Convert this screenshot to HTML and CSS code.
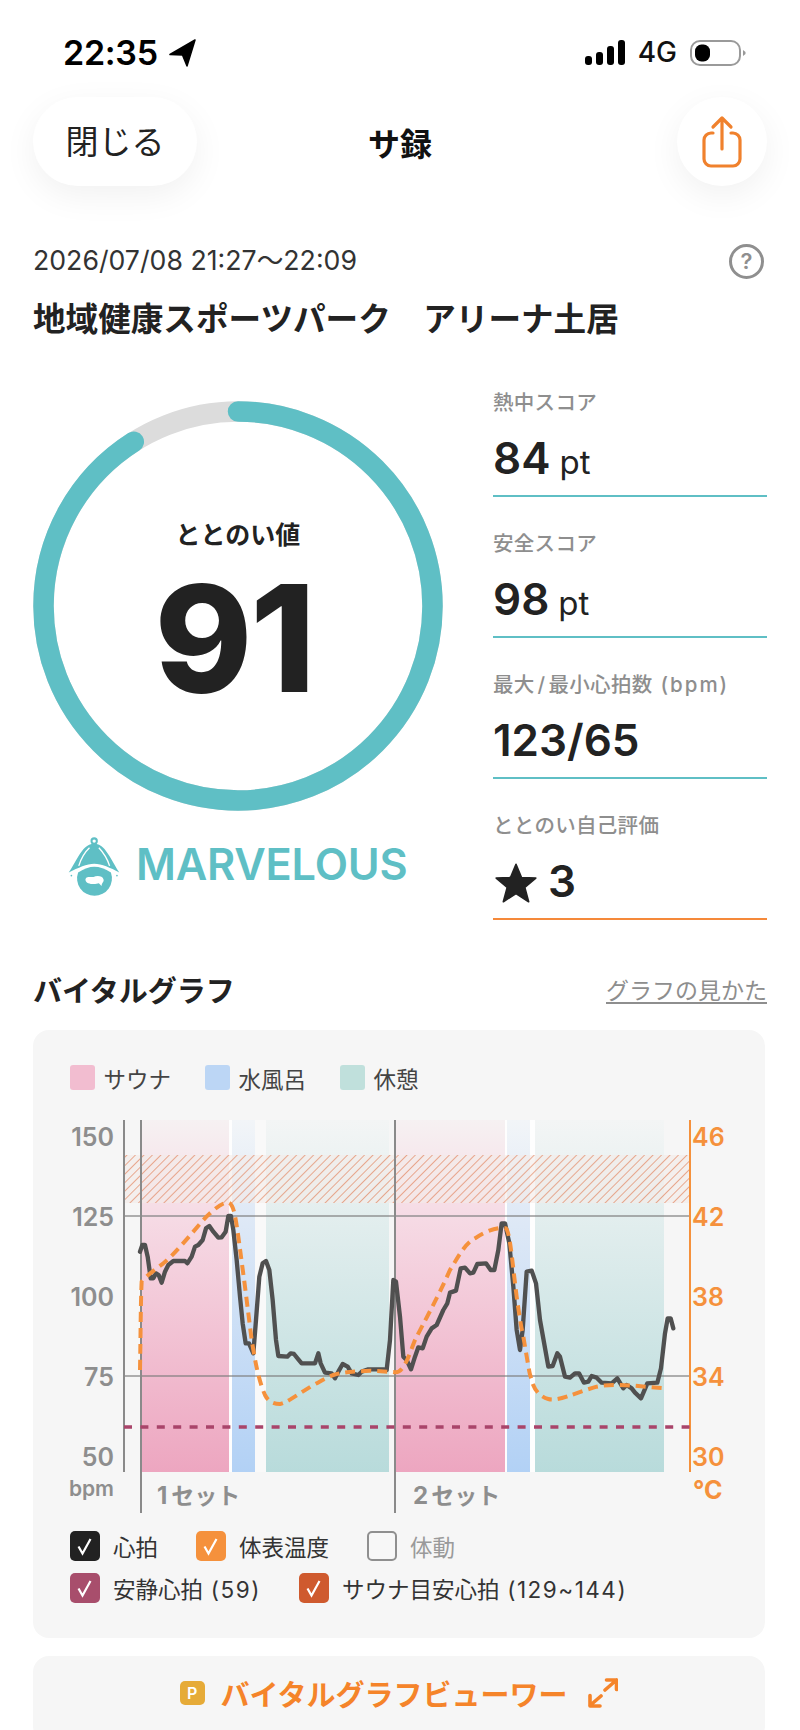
FILE: index.html
```html
<!DOCTYPE html>
<html lang="ja">
<head>
<meta charset="utf-8">
<title>サ録</title>
<link rel="stylesheet" href="styles.css">
</head>
<body>
<div class="phone">
  <div class="status">
    <div class="status-left">
      <span class="time">22:35</span>
      <svg class="loc" viewBox="0 0 28 28"><path d="M26 1 L1 15.500 L13.500 16 L18 27 Z"/></svg>
    </div>
    <div class="status-right">
      <svg class="signal" viewBox="0 0 40 25"><rect x="0" y="16" width="7" height="9" rx="3"/><rect x="11" y="12" width="7" height="13" rx="3"/><rect x="22" y="6" width="7" height="19" rx="3"/><rect x="33" y="0" width="7" height="25" rx="3"/></svg>
      <span class="net">4G</span>
      <svg class="battery" viewBox="0 0 56 26"><rect x="1" y="1" width="49" height="24" rx="9" class="bat-o"/><rect x="5" y="4.500" width="15" height="17" rx="6.500"/><path d="M53 10 L55.500 12 V14 L53 16Z" class="bat-n"/></svg>
    </div>
  </div>

  <header class="nav">
    <button class="pill close-btn">閉じる</button>
    <div class="nav-title">サ録</div>
    <button class="pill share-btn" aria-label="share">
      <svg class="share" viewBox="0 0 44 54"><path d="M13 18 H11 A7 7 0 0 0 4 25 V44 A7 7 0 0 0 11 51 H33 A7 7 0 0 0 40 44 V25 A7 7 0 0 0 33 18 H31 M22 34 V3 M13 12 L22 3 L31 12"/></svg>
    </button>
  </header>

  <main class="content">
    <div class="date-row">
      <span class="date">2026/07/08 21:27～22:09</span>
      <span class="help">?</span>
    </div>
    <h1 class="venue">地域健康スポーツパーク　アリーナ土居</h1>

    <section class="summary">
      <div class="score-col">
        <div class="gauge">
          <svg class="gauge-ring" viewBox="0 0 410 410">
            <circle cx="205" cy="205" r="194.500" class="ring-bg"/>
            <circle cx="205" cy="205" r="194.500" class="ring-fg" pathLength="100" stroke-dasharray="91 100"/>
          </svg>
          <div class="gauge-text">
            <div class="gauge-label">ととのい値</div>
            <div class="gauge-value">91</div>
          </div>
        </div>
        <div class="rank">
          <svg class="hat" viewBox="0 0 200 200">
            <circle cx="102" cy="30" r="8" class="hat-ring"/>
            <path class="hat-fill" d="M102 38 C80 38 68 55 55 75 C45 92 35 110 26 124 C55 110 80 98 102 98 C125 98 150 110 177 124 C168 110 158 92 148 75 C135 55 124 38 102 38Z"/>
            <path class="hat-rib" d="M88 50 C72 65 62 85 56 104 M116 50 C130 65 142 85 148 104"/>
            <path class="hat-fill" d="M54 124 C72 113 88 107 102 107 C118 107 135 113 152 124 A52 52 0 1 1 54 124Z"/>
            <path class="hat-white" d="M76 146 C76 133 95 139 100 137 C110 133 127 133 130 145 C132 152 125 154 124 164 L116 156 C105 160 78 160 76 146Z"/>
            <circle cx="34" cy="133" r="2.500" class="hat-fill"/><circle cx="170" cy="133" r="2.500" class="hat-fill"/>
          </svg>
          <span class="rank-text">MARVELOUS</span>
        </div>
      </div>
      <div class="stats">
        <div class="stat">
          <div class="stat-label">熱中スコア</div>
          <div class="stat-value">84<span class="unit">pt</span></div>
        </div>
        <div class="stat">
          <div class="stat-label">安全スコア</div>
          <div class="stat-value">98<span class="unit">pt</span></div>
        </div>
        <div class="stat">
          <div class="stat-label">最大<span class="slash">/</span>最小心拍数<span class="bpm-unit">(bpm)</span></div>
          <div class="stat-value">123/65</div>
        </div>
        <div class="stat stat-self">
          <div class="stat-label">ととのい自己評価</div>
          <div class="stat-value">
            <svg class="star" viewBox="0 0 40 40"><path d="M20 3 L25 15 L38 15.500 L28 24 L31.500 37 L20 29.500 L8.500 37 L12 24 L2 15.500 L15 15 Z"/></svg>3
          </div>
        </div>
      </div>
    </section>

    <div class="section-head">
      <h2 class="section-title">バイタルグラフ</h2>
      <a class="section-link">グラフの見かた</a>
    </div>

    <section class="card chart-card">
      <div class="legend">
        <span class="legend-item"><i class="sw sw-sauna"></i>サウナ</span>
        <span class="legend-item"><i class="sw sw-water"></i>水風呂</span>
        <span class="legend-item"><i class="sw sw-rest"></i>休憩</span>
      </div>
      <svg class="chart" viewBox="33 1100 734 420">
        <defs>
          <pattern id="hatch" width="6" height="6" patternUnits="userSpaceOnUse" patternTransform="rotate(45)">
            <line x1="0" y1="0" x2="0" y2="6" class="hatch-line"/>
          </pattern>
          <linearGradient id="gPink" x1="0" y1="0" x2="0" y2="1"><stop offset="0" stop-color="#f6f1f2"/><stop offset=".27" stop-color="#f6dbe5"/><stop offset="1" stop-color="#eda6c0"/></linearGradient>
          <linearGradient id="gBlue" x1="0" y1="0" x2="0" y2="1"><stop offset="0" stop-color="#f2f5f8"/><stop offset=".27" stop-color="#dfe9f6"/><stop offset="1" stop-color="#b2d1f5"/></linearGradient>
          <linearGradient id="gTeal" x1="0" y1="0" x2="0" y2="1"><stop offset="0" stop-color="#f3f5f5"/><stop offset=".27" stop-color="#e3eeee"/><stop offset="1" stop-color="#b8dbdb"/></linearGradient>
        </defs>
        <rect x="229" y="1120" width="3" height="352" class="gap"/>
        <rect x="255" y="1120" width="11" height="352" class="gap-soft"/>
        <rect x="505" y="1120" width="2" height="352" class="gap"/>
        <rect x="530" y="1120" width="5" height="352" class="gap"/>
        <rect x="142" y="1120" width="87" height="352" fill="url(#gPink)"/>
        <rect x="232" y="1120" width="23" height="352" fill="url(#gBlue)"/>
        <rect x="266" y="1120" width="123" height="352" fill="url(#gTeal)"/>
        <rect x="396" y="1120" width="109" height="352" fill="url(#gPink)"/>
        <rect x="507" y="1120" width="23" height="352" fill="url(#gBlue)"/>
        <rect x="535" y="1120" width="129" height="352" fill="url(#gTeal)"/>
        <rect x="124" y="1155" width="566" height="48" class="band"/>
        <rect x="124" y="1155" width="566" height="48" fill="url(#hatch)"/>
        <line x1="124" y1="1216" x2="690" y2="1216" class="grid"/>
        <line x1="124" y1="1376" x2="690" y2="1376" class="grid"/>
        <line x1="124" y1="1120" x2="124" y2="1472" class="axis"/>
        <line x1="141" y1="1120" x2="141" y2="1513" class="axis"/>
        <line x1="395" y1="1120" x2="395" y2="1513" class="axis"/>
        <line x1="690" y1="1120" x2="690" y2="1472" class="axis-r"/>
        <line x1="124" y1="1427" x2="690" y2="1427" class="rest-line"/>
        <g transform="translate(50 1100) scale(.33333)">
          <path class="hr" d="M270 455 L277 435 L285 435 L293 470 L302 535 L310 535 L318 520 L326 525 L335 548 L345 515 L355 495 L370 483 L405 483 L412 490 L425 470 L435 440 L445 435 L458 420 L468 385 L478 378 L490 395 L505 413 L515 412 L527 395 L535 348 L543 348 L550 390 L560 480 L570 590 L578 670 L587 730 L597 730 L610 760 L618 660 L628 530 L638 490 L648 483 L658 510 L668 600 L678 720 L685 768 L712 770 L722 760 L732 762 L745 778 L755 790 L795 790 L805 760 L812 790 L825 818 L845 820 L855 835 L865 815 L878 792 L893 800 L905 820 L925 825 L935 815 L955 808 L1000 808 L1010 810 L1020 720 L1030 540 L1038 545 L1050 650 L1060 770 L1070 780 L1083 808 L1095 770 L1105 742 L1118 745 L1130 710 L1145 685 L1160 675 L1180 630 L1192 610 L1200 578 L1218 572 L1232 505 L1245 503 L1260 520 L1270 518 L1282 492 L1308 490 L1322 510 L1333 510 L1345 450 L1355 370 L1365 370 L1378 430 L1390 560 L1400 690 L1410 750 L1418 690 L1430 515 L1445 512 L1458 550 L1470 660 L1495 800 L1508 798 L1522 760 L1530 770 L1545 830 L1560 833 L1575 820 L1587 820 L1602 848 L1615 845 L1625 828 L1640 833 L1655 848 L1685 850 L1702 835 L1720 865 L1730 855 L1745 865 L1755 878 L1773 895 L1792 850 L1822 848 L1833 805 L1845 700 L1853 655 L1862 655 L1870 685"/>
          <path class="temp" d="M270 810 C272 700 272 600 275 545 C285 530 320 505 340 490 C370 465 400 430 460 360 C490 328 520 305 535 308 C550 312 555 340 565 410 L585 560 L605 720 C615 780 625 840 645 885 C655 905 670 912 690 912 C710 908 725 895 790 855 C810 845 830 832 850 825 C880 815 910 815 960 812 L1030 816 C1060 825 1075 770 1095 720 C1120 670 1160 600 1200 510 C1225 470 1245 430 1275 415 C1310 390 1350 380 1368 385 C1380 400 1385 470 1400 590 C1410 660 1415 690 1420 710 C1432 780 1440 830 1442 830 C1450 870 1470 890 1495 897 C1525 905 1570 880 1640 860 C1680 852 1720 855 1750 857 L1845 865"/>
        </g>
        <text x="114" y="1146" class="tick">150</text>
        <text x="114" y="1226" class="tick">125</text>
        <text x="114" y="1306" class="tick">100</text>
        <text x="114" y="1386" class="tick">75</text>
        <text x="114" y="1466" class="tick">50</text>
        <text x="114" y="1496" class="bpm">bpm</text>
        <text x="692" y="1146" class="tick-r">46</text>
        <text x="692" y="1226" class="tick-r">42</text>
        <text x="692" y="1306" class="tick-r">38</text>
        <text x="692" y="1386" class="tick-r">34</text>
        <text x="692" y="1466" class="tick-r">30</text>
        <text x="693" y="1499" class="deg">°C</text>
        <text x="157" y="1504" class="set">1<tspan class="set-kana" dx="4">セット</tspan></text>
        <text x="413" y="1504" class="set">2<tspan class="set-kana" dx="3">セット</tspan></text>
      </svg>
      <div class="checks">
        <div class="check-row">
          <span class="check-item"><i class="box box-black"><svg class="tick-mark" viewBox="0 0 30 30"><path d="M8.500 15.500 L12.500 22.500 L20.500 8"/></svg></i>心拍</span>
          <span class="check-item"><i class="box box-orange"><svg class="tick-mark" viewBox="0 0 30 30"><path d="M8.500 15.500 L12.500 22.500 L20.500 8"/></svg></i>体表温度</span>
          <span class="check-item off"><i class="box box-empty"></i>体動</span>
        </div>
        <div class="check-row">
          <span class="check-item"><i class="box box-plum"><svg class="tick-mark" viewBox="0 0 30 30"><path d="M8.500 15.500 L12.500 22.500 L20.500 8"/></svg></i><span>安静心拍<span class="lat"> (59)</span></span></span>
          <span class="check-item"><i class="box box-red"><svg class="tick-mark" viewBox="0 0 30 30"><path d="M8.500 15.500 L12.500 22.500 L20.500 8"/></svg></i><span>サウナ目安心拍<span class="lat"> (129~144)</span></span></span>
        </div>
      </div>
    </section>

    <section class="card viewer">
      <span class="p-badge">P</span>
      <span class="viewer-text">バイタルグラフビューワー</span>
      <svg class="expand" viewBox="0 0 30 30"><path d="M17 12 L28.500 2 M18.500 2 H28.500 V11.500 M13 18 L2 27.500 M2 17.500 V28 H12"/></svg>
    </section>
  </main>
</div>
</body>
</html>
```
FILE: styles.css
```css
* { box-sizing: border-box; }
html, body { margin: 0; padding: 0; background: #fff; }
body { font-family: Inter, "Noto Sans CJK JP", sans-serif; color: #222; }
.phone { width: 800px; height: 1730px; overflow: hidden; background: #fff; }

.status { height: 97px; padding: 40px 54px 0 63px; display: flex; justify-content: space-between; align-items: flex-start; }
.status-left, .status-right { display: flex; align-items: center; height: 25px; }
.time { font-size: 34px; font-weight: 600; color: #000; letter-spacing: -.3px; line-height: 25px; }
.loc { width: 28px; height: 28px; margin-left: 11px; fill: #000; stroke: #000; stroke-width: 1.500; stroke-linejoin: round; }
.signal { width: 40px; height: 25px; fill: #000; }
.net { font-size: 28px; font-weight: 500; color: #111; margin: 0 13px; line-height: 25px; }
.battery { width: 56px; height: 26px; fill: #000; }
.bat-o { fill: none; stroke: #9a9a9a; stroke-width: 2; }
.bat-n { fill: #999; }

.nav { height: 89px; margin: 0 33px; display: grid; grid-template-columns: 1fr auto 1fr; align-items: center; }
.pill { height: 89px; border: 0; background: #fff; border-radius: 45px; box-shadow: 0 10px 34px rgba(0, 0, 0, .06); font-family: inherit; padding: 0; display: flex; align-items: center; justify-content: center; color: #222; }
.close-btn { width: 164px; font-size: 33px; font-weight: 400; padding-bottom: 3px; }
.share-btn { width: 90px; justify-self: end; }
.nav-title { font-size: 32px; font-weight: 700; color: #111; }
.share { width: 44px; height: 54px; fill: none; stroke: #f0812d; stroke-width: 3.200; stroke-linecap: round; stroke-linejoin: round; margin-top: 1px; }

.content { padding: 0 33px; }
.date-row { margin-top: 54px; height: 36px; display: flex; align-items: center; justify-content: space-between; }
.date { font-size: 26.700px; font-weight: 400; color: #333; }
.help { width: 35px; height: 35px; border-radius: 50%; border: 3px solid #8f8f8f; color: #8f8f8f; font-size: 22px; font-weight: 600; display: flex; align-items: center; justify-content: center; margin: 6px 3px 0 0; }
.venue { margin: 23px 0 0; font-size: 32.600px; line-height: 40px; height: 40px; font-weight: 600; color: #222; white-space: nowrap; }

.summary { height: 564px; margin-top: 17px; display: flex; justify-content: space-between; }
.score-col { width: 410px; padding-top: 45px; }
.gauge { width: 410px; height: 410px; position: relative; }
.gauge-ring { width: 410px; height: 410px; display: block; }
.ring-bg { fill: none; stroke: #dcdcdc; stroke-width: 20.500; }
.ring-fg { fill: none; stroke: #5fbfc5; stroke-width: 20.500; stroke-linecap: round; transform: rotate(-90deg); transform-origin: 205px 205px; }
.gauge-text { position: absolute; inset: 0; display: flex; flex-direction: column; align-items: center; }
.gauge-label { margin-top: 116px; font-size: 25px; line-height: 36px; font-weight: 700; color: #222; }
.gauge-value { margin: 3px 8px 0 0; font-size: 148px; line-height: 166px; font-weight: 800; color: #222; letter-spacing: -2px; }
.rank { margin-top: 23px; padding-left: 27px; display: flex; align-items: center; height: 60px; }
.hat { width: 67px; height: 67px; flex: none; }
.hat-fill { fill: #5fbfc5; }
.hat-ring { fill: none; stroke: #5fbfc5; stroke-width: 6; }
.hat-rib { fill: none; stroke: #fff; stroke-width: 4; }
.hat-white { fill: #fff; }
.rank-text { margin-left: 9px; font-size: 43.300px; font-weight: 600; color: #5fbfc5; line-height: 60px; letter-spacing: -.2px; }

.stats { width: 274px; }
.stat { height: 141px; border-bottom: 2px solid #5fbfc5; display: flex; flex-direction: column; justify-content: flex-end; padding-bottom: 8px; }
.stat-self { border-bottom-color: #f5893a; }
.stat-label { font-size: 20.500px; line-height: 28px; font-weight: 500; color: #8e8e8e; letter-spacing: .3px; white-space: nowrap; margin-bottom: 16px; }
.slash { margin: 0 3px; }
.bpm-unit { margin-left: 8px; letter-spacing: 2px; }
.stat-value { height: 54px; font-size: 44px; line-height: 50px; font-weight: 600; color: #222; display: flex; align-items: baseline; }
.unit { font-size: 33px; font-weight: 400; margin-left: 9px; }
.star { width: 44px; height: 44px; fill: #222; stroke: #222; stroke-width: 1.500; stroke-linejoin: round; margin: 0 10px 0 1px; align-self: center; }

.section-head { margin-top: 49px; height: 40px; margin-bottom: 21px; display: flex; align-items: center; justify-content: space-between; }
.section-title { margin: 0; font-size: 29px; font-weight: 700; color: #222; }
.section-link { font-size: 23px; color: #8e8e8e; text-decoration: underline; text-underline-offset: 3px; }

.card { background: #f6f6f6; border-radius: 16px; width: 732px; }
.chart-card { height: 608px; padding-top: 35px; }
.legend { height: 25px; padding-left: 37px; display: flex; gap: 34px; }
.legend-item { display: flex; align-items: center; gap: 8.500px; font-size: 22.500px; color: #444; }
.sw { display: block; width: 25px; height: 25px; border-radius: 3px; }
.sw-sauna { background: #f2bdd0; }
.sw-water { background: #bcd6f5; }
.sw-rest { background: #c0e0dc; }

.chart { display: block; width: 734px; height: 420px; margin-top: 10px; }
.band { fill: #f3ebe8; fill-opacity: .6; }
.hatch-line { stroke: #dd6f42; stroke-width: 1.400; stroke-opacity: .8; }
.gap { fill: #fff; fill-opacity: .9; }
.gap-soft { fill: #fff; fill-opacity: .3; }
.grid { stroke: #7d7d7d; stroke-width: 2; stroke-opacity: .6; }
.axis { stroke: #8a8a8a; stroke-width: 2; }
.axis-r { stroke: #f5913c; stroke-width: 2; }
.rest-line { stroke: #a9446a; stroke-width: 3.500; stroke-dasharray: 8 8.400; }
.hr { fill: none; stroke: #505050; stroke-width: 13; stroke-linejoin: round; stroke-linecap: round; }
.temp { fill: none; stroke: #f5913c; stroke-width: 12; stroke-dasharray: 30 18; }
.tick, .tick-r { font-size: 25px; font-weight: 600; font-family: Inter, sans-serif; }
.tick { fill: #8e8e8e; text-anchor: end; }
.tick-r { fill: #f5913c; }
.bpm { font-size: 21px; font-weight: 600; fill: #8e8e8e; text-anchor: end; font-family: Inter, sans-serif; }
.deg { font-size: 25px; font-weight: 700; fill: #f5913c; font-family: Inter, sans-serif; }
.set { font-size: 24px; font-weight: 700; fill: #8e8e8e; font-family: Inter, "Noto Sans CJK JP", sans-serif; }
.set-kana { font-size: 23px; font-weight: 700; }

.checks { margin-top: 11px; padding-left: 37px; display: flex; flex-direction: column; gap: 12px; }
.check-row { display: flex; gap: 38px; height: 30px; }
.check-item { display: flex; align-items: center; gap: 13px; font-size: 22.500px; color: #333; white-space: nowrap; }
.check-item.off { color: #9a9a9a; }
.lat { letter-spacing: 1.500px; }
.box { display: block; width: 30px; height: 30px; border-radius: 5px; flex: none; }
.box-black { background: #222; }
.box-orange { background: #f5913c; }
.box-plum { background: #a84e6c; }
.box-red { background: #cf5a2e; }
.box-empty { background: #f7f7f7; border: 2.500px solid #8f8f8f; }
.tick-mark { display: block; width: 30px; height: 30px; fill: none; stroke: #fff; stroke-width: 2.200; }

.viewer { margin-top: 18px; height: 86px; padding-bottom: 12px; display: flex; align-items: center; justify-content: center; }
.p-badge { width: 25px; height: 24px; border-radius: 5px; background: #e6ab38; color: #fff; font-size: 16px; font-weight: 600; display: flex; align-items: center; justify-content: center; }
.viewer-text { margin-left: 16px; font-size: 29px; font-weight: 600; color: #f5842a; white-space: nowrap; }
.expand { width: 30px; height: 30px; margin-left: 21px; fill: none; stroke: #f5842a; stroke-width: 3.600; stroke-linecap: round; stroke-linejoin: round; }
```
